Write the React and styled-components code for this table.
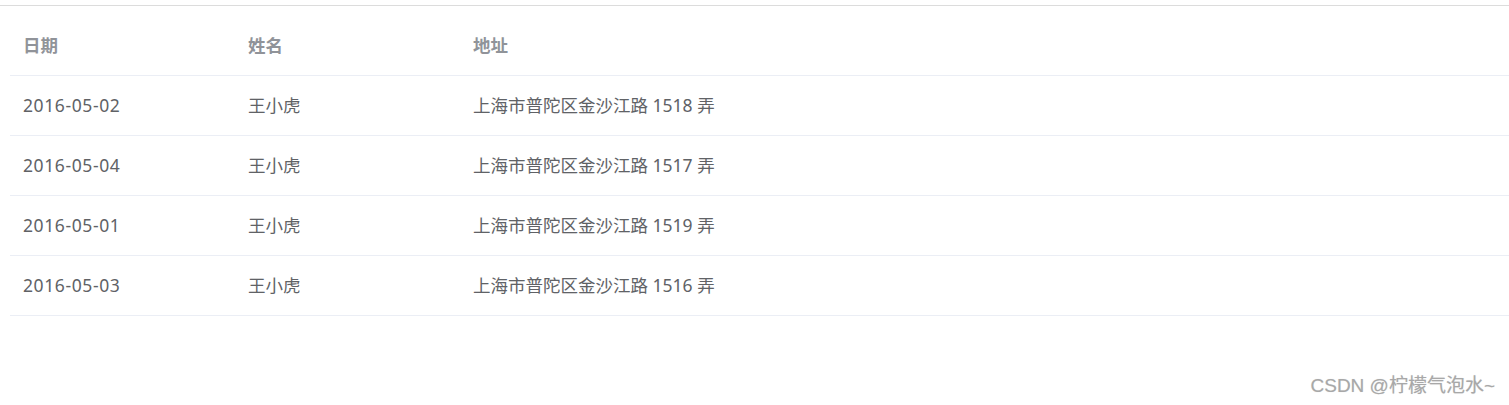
import React from "react";
import styled, { createGlobalStyle } from "styled-components";

const GlobalStyle = createGlobalStyle`
  html, body {
    margin: 0;
    padding: 0;
    background: #fff;
  }
  body {
    font-family: "Noto Sans", "Noto Sans CJK SC", sans-serif;
  }
`;

const Page = styled.div`
  position: relative;
  width: 1509px;
  height: 405px;
  overflow: hidden;
`;

const TopRule = styled.div`
  margin-top: 5px;
  height: 1px;
  background: #dcdcdc;
`;

const TableWrap = styled.div`
  margin: 9px 0 0 10px;
`;

const Table = styled.table`
  width: 100%;
  border-collapse: collapse;
  table-layout: fixed;
  font-size: 17.5px;
`;

const Th = styled.th`
  box-sizing: border-box;
  height: 60px;
  padding: 0 0 1px 13px;
  text-align: left;
  font-weight: 700;
  color: #909399;
  border-bottom: 1px solid #ebeef5;
  width: ${(p) => (p.$w ? `${p.$w}px` : "auto")};
`;

const Td = styled.td`
  box-sizing: border-box;
  height: 60px;
  padding: 0 0 1px 13px;
  color: #606266;
  border-bottom: 1px solid #ebeef5;
  letter-spacing: ${(p) => (p.$wide ? "0.6px" : "0")};
`;

const Watermark = styled.div`
  position: absolute;
  right: 14px;
  bottom: 8px;
  font-family: "Liberation Sans", "Noto Sans CJK SC", sans-serif;
  font-size: 19px;
  color: #a8a8a8;
  text-shadow: 0 0 1px #d8d8d8;
`;

const rows = [
  { date: "2016-05-02", name: "王小虎", address: "上海市普陀区金沙江路 1518 弄" },
  { date: "2016-05-04", name: "王小虎", address: "上海市普陀区金沙江路 1517 弄" },
  { date: "2016-05-01", name: "王小虎", address: "上海市普陀区金沙江路 1519 弄" },
  { date: "2016-05-03", name: "王小虎", address: "上海市普陀区金沙江路 1516 弄" },
];

export default function App() {
  return (
    <>
      <GlobalStyle />
      <Page>
        <TopRule />
        <TableWrap>
          <Table>
            <thead>
              <tr>
                <Th $w={225}>日期</Th>
                <Th $w={225}>姓名</Th>
                <Th>地址</Th>
              </tr>
            </thead>
            <tbody>
              {rows.map((r) => (
                <tr key={r.date}>
                  <Td $wide>{r.date}</Td>
                  <Td>{r.name}</Td>
                  <Td>{r.address}</Td>
                </tr>
              ))}
            </tbody>
          </Table>
        </TableWrap>
        <Watermark>CSDN @柠檬气泡水~</Watermark>
      </Page>
    </>
  );
}
